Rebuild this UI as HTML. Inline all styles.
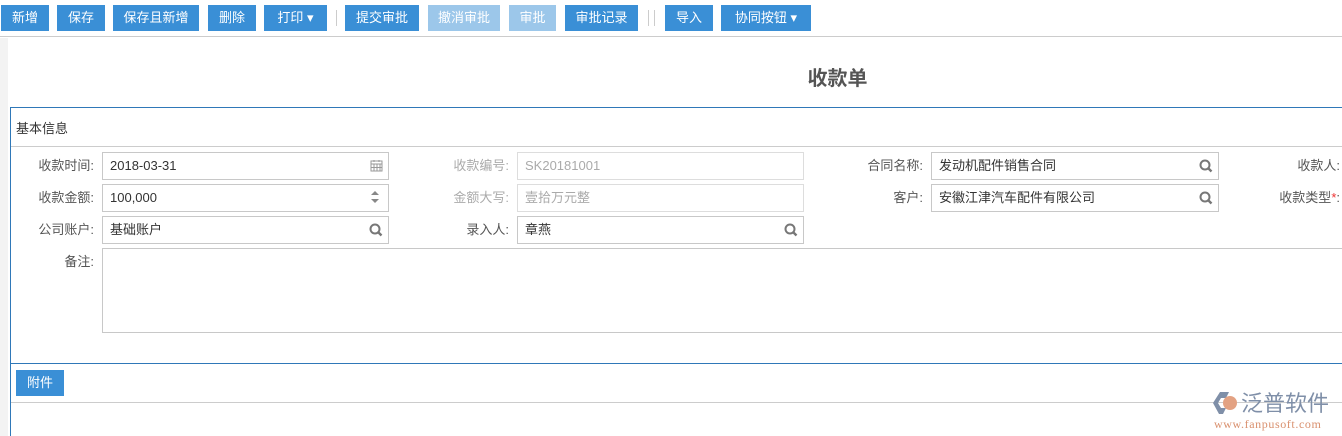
<!DOCTYPE html>
<html><head><meta charset="utf-8">
<style>
*{margin:0;padding:0;box-sizing:border-box}
body{width:1342px;height:436px;overflow:hidden;background:#fff;font-family:"Liberation Sans","Noto Sans CJK SC",sans-serif;font-size:13px;color:#333;position:relative}
.a{position:absolute;white-space:nowrap}
.btn{position:absolute;top:5px;height:26px;background:#3a8fd6;color:#fff;font-size:13px;line-height:26px;text-align:center;white-space:nowrap}
.btn.d{background:#9cc7ea}
.sep{position:absolute;top:10px;width:1px;height:16px;background:#ccc}
.lbl{position:absolute;text-align:right;line-height:27px;color:#555;white-space:nowrap}
.lbl.g{color:#aaa}
.in{position:absolute;height:28px;border:1px solid #c8c8c8;background:#fff;line-height:26px;padding-left:7px;color:#333;white-space:nowrap}
.in.g{color:#aaa;border-color:#ddd}
.ic{position:absolute;right:5px;top:6px}
</style></head><body>
<div class="a" style="left:0;top:0;width:1342px;height:37px;background:#fff;border-bottom:1px solid #ccc"></div>
<div class="btn" style="left:1px;width:48px">新增</div>
<div class="btn" style="left:57px;width:48px">保存</div>
<div class="btn" style="left:113px;width:86px">保存且新增</div>
<div class="btn" style="left:208px;width:48px">删除</div>
<div class="btn" style="left:264px;width:63px">打印 ▾</div>
<div class="sep" style="left:336px"></div>
<div class="btn" style="left:345px;width:74px">提交审批</div>
<div class="btn d" style="left:428px;width:72px">撤消审批</div>
<div class="btn d" style="left:509px;width:47px">审批</div>
<div class="btn" style="left:565px;width:73px">审批记录</div>
<div class="sep" style="left:648px"></div>
<div class="sep" style="left:654px"></div>
<div class="btn" style="left:665px;width:48px">导入</div>
<div class="btn" style="left:721px;width:90px">协同按钮 ▾</div>
<div class="a" style="left:0;top:38px;width:8px;height:398px;background:#f3f3f3"></div>
<div class="a" style="left:760px;top:62px;width:155px;text-align:center;font-size:20px;font-weight:bold;color:#555">收款单</div>
<div class="a" style="left:10px;top:107px;width:1332px;height:1px;background:#2f78b8"></div>
<div class="a" style="left:10px;top:107px;width:1px;height:329px;background:#2f78b8"></div>
<div class="a" style="left:16px;top:118px;color:#333">基本信息</div>
<div class="a" style="left:11px;top:146px;width:1331px;height:1px;background:#ccc"></div>

<div class="lbl" style="left:0;width:94px;top:152px">收款时间:</div>
<div class="in" style="left:102px;top:152px;width:287px">2018-03-31<svg class="ic" width="13" height="13" viewBox="0 0 13 13"><rect x="1" y="2" width="11" height="10" fill="none" stroke="#999"/><path d="M1 5h11M4 5v7M7 5v7M10 5v7M1 8.5h11M4 1v2M9 1v2" stroke="#999"/></svg></div>
<div class="lbl" style="left:0;width:94px;top:184px">收款金额:</div>
<div class="in" style="left:102px;top:184px;width:287px">100,000<svg class="ic" width="10" height="16" viewBox="0 0 10 16" style="top:4px;right:8px"><path d="M1 6L5 2L9 6Z M1 10L5 14L9 10Z" fill="#888"/></svg></div>
<div class="lbl" style="left:0;width:94px;top:216px">公司账户:</div>
<div class="in" style="left:102px;top:216px;width:287px">基础账户<svg class="ic" width="14" height="14" viewBox="0 0 14 14"><circle cx="6" cy="6" r="4.5" fill="none" stroke="#777" stroke-width="2"/><path d="M9 9l3.5 3.5" stroke="#777" stroke-width="2.4"/></svg></div>
<div class="lbl" style="left:0;width:94px;top:248px">备注:</div>
<div class="in" style="left:102px;top:248px;width:1260px;height:85px"></div>

<div class="lbl g" style="left:400px;width:109px;top:152px">收款编号:</div>
<div class="in g" style="left:517px;top:152px;width:287px">SK20181001</div>
<div class="lbl g" style="left:400px;width:109px;top:184px">金额大写:</div>
<div class="in g" style="left:517px;top:184px;width:287px">壹拾万元整</div>
<div class="lbl" style="left:400px;width:109px;top:216px">录入人:</div>
<div class="in" style="left:517px;top:216px;width:287px">章燕<svg class="ic" width="14" height="14" viewBox="0 0 14 14"><circle cx="6" cy="6" r="4.5" fill="none" stroke="#777" stroke-width="2"/><path d="M9 9l3.5 3.5" stroke="#777" stroke-width="2.4"/></svg></div>

<div class="lbl" style="left:800px;width:123px;top:152px">合同名称:</div>
<div class="in" style="left:931px;top:152px;width:288px">发动机配件销售合同<svg class="ic" width="14" height="14" viewBox="0 0 14 14"><circle cx="6" cy="6" r="4.5" fill="none" stroke="#777" stroke-width="2"/><path d="M9 9l3.5 3.5" stroke="#777" stroke-width="2.4"/></svg></div>
<div class="lbl" style="left:800px;width:123px;top:184px">客户:</div>
<div class="in" style="left:931px;top:184px;width:288px">安徽江津汽车配件有限公司<svg class="ic" width="14" height="14" viewBox="0 0 14 14"><circle cx="6" cy="6" r="4.5" fill="none" stroke="#777" stroke-width="2"/><path d="M9 9l3.5 3.5" stroke="#777" stroke-width="2.4"/></svg></div>
<div class="lbl" style="left:1220px;width:120px;top:152px">收款人:</div>
<div class="lbl" style="left:1220px;width:120px;top:184px">收款类型<span style="color:#e33">*</span>:</div>

<div class="a" style="left:10px;top:363px;width:1332px;height:1px;background:#2f78b8"></div>
<div class="a" style="left:16px;top:370px;width:48px;height:26px;background:#3a8fd6;color:#fff;line-height:26px;text-align:center">附件</div>
<div class="a" style="left:11px;top:402px;width:1331px;height:1px;background:#ccc"></div>

<svg class="a" style="left:1213px;top:391px" width="26" height="24" viewBox="0 0 26 24"><path d="M7 1h9l-3 6h-5l-3 5 3 5h5l-3 6H6L0 12Z" fill="#7f8fa8"/><circle cx="17" cy="12" r="7" fill="#e3a283"/></svg>
<div class="a" style="left:1241px;top:388px;font-size:22px;color:#7f8fa8;font-family:'Noto Sans CJK SC',sans-serif;line-height:28px">泛普软件</div>
<div class="a" style="left:1214px;top:417px;font-size:12px;color:#d9906e;font-family:'Liberation Serif',serif;letter-spacing:0.6px;line-height:14px">www.fanpusoft.com</div>
</body></html>
